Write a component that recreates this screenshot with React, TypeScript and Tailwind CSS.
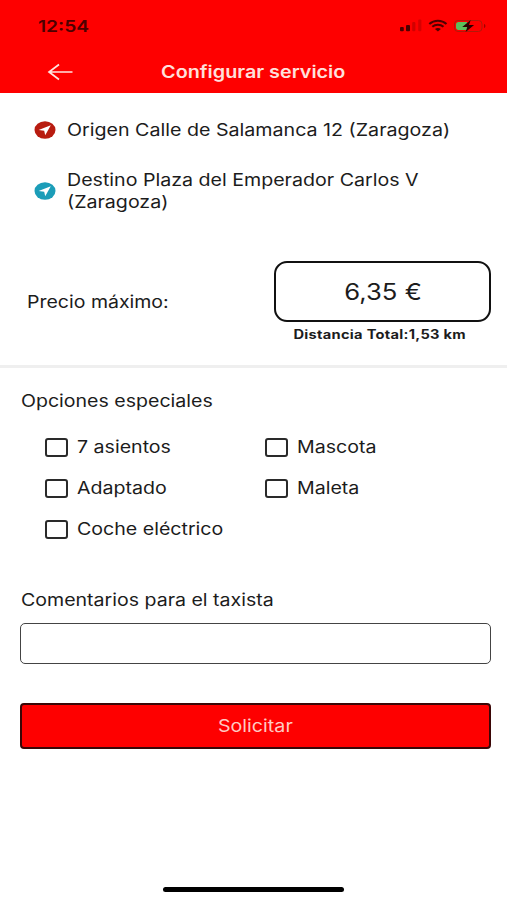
import { useState } from "react";
import type { ReactNode } from "react";
import clsx from "clsx";

const options = [
  { id: "asientos", label: "7 asientos" },
  { id: "mascota", label: "Mascota" },
  { id: "adaptado", label: "Adaptado" },
  { id: "maleta", label: "Maleta" },
  { id: "electrico", label: "Coche eléctrico" },
];

// Wide lettering used on the whole screen
function Wide({ className, children }: { className?: string; children: ReactNode }) {
  return (
    <span className={clsx("block w-max whitespace-nowrap", className)}>{children}</span>
  );
}

function StatusIcons() {
  return (
    <svg width="90" height="16" viewBox="0 0 90 16" fill="none">
      <rect x="1" y="9" width="3.8" height="4.2" rx="1" fill="#4d0000" />
      <rect x="7" y="7" width="4" height="6.2" rx="1" fill="#4d0000" />
      <rect x="13.2" y="4" width="3.2" height="9.2" rx="1" fill="#d00000" />
      <rect x="19.2" y="1.5" width="3.2" height="11.7" rx="1" fill="#d60000" />
      <path d="M30.3 6C35 1.6 42.8 1.6 47.5 6" stroke="#4d0000" strokeWidth="2.1" />
      <path d="M33.3 8.8C36.4 6 41.4 6 44.5 8.800" stroke="#4d0000" strokeWidth="2.1" />
      <path d="M35.900 11C37.500 9.500 40.300 9.500 41.900 11L38.900 13.600Z" fill="#4d0000" />
      <rect x="55.500" y="2.500" width="27.500" height="11" rx="3.500" stroke="#b01a0a" />
      <path d="M59.500 4H68V12H59.500C58 12 57 11 57 9.500V6.500C57 5 58 4 59.500 4Z" fill="#5cbf5c" />
      <path d="M85 6C86.900 6.500 86.900 9.500 85 10Z" fill="#a00000" />
      <path d="M71.700 2L63.200 8.900H68.300L66.600 14L75.100 7.100H70Z" fill="#2a0000" />
    </svg>
  );
}

function PlaceIcon({ color }: { color: string }) {
  return (
    <svg width="22" height="18" viewBox="0 0 22 18">
      <ellipse cx="11" cy="9" rx="10.500" ry="8.700" fill={color} />
      <path d="M16.800 4.300L4.600 9.100L10.200 9.800L11.200 14.300Z" fill="#fff" />
    </svg>
  );
}

export default function App() {
  const [selected, setSelected] = useState<string[]>([]);
  const [comment, setComment] = useState("");

  const toggle = (id: string) => {
    setSelected((prev) =>
      prev.includes(id) ? prev.filter((item) => item !== id) : [...prev, id]
    );
  };

  return (
    <div className="flex h-[900px] w-[507px] flex-col overflow-hidden bg-white font-['Inter','Liberation_Sans',sans-serif] text-[17px] leading-[22px] text-[#1c1c1c]">
      <header className="h-[93px] bg-[#fe0000]">
        <div className="flex h-[52px] items-center justify-between pr-[18px] pl-[38px]">
          <Wide className="origin-left scale-x-[1.2] text-base font-semibold text-[#4d0000]">12:54</Wide>
          <StatusIcons />
        </div>
        <div className="relative flex h-[39px] items-center justify-center pt-px">
          <button className="absolute left-[47px]" aria-label="Volver">
            <svg width="27" height="18" viewBox="0 0 27 18" fill="none" stroke="#ffe3df" strokeWidth="1.700">
              <path d="M25.500 9H2M12 1.500L2 9L12 16.500" />
            </svg>
          </button>
          <Wide className="scale-x-[1.163] font-semibold text-[#ffe0dc]">Configurar servicio</Wide>
        </div>
      </header>

      <section className="h-[272px] pl-[34px] pt-[26px]">
        <div className="flex items-center gap-[11px]">
          <PlaceIcon color="#b81c10" />
          <Wide className="origin-left scale-x-[1.155]">Origen Calle de Salamanca 12 (Zaragoza)</Wide>
        </div>
        <div className="mt-7 flex items-center gap-[11px]">
          <PlaceIcon color="#1b9db8" />
          <div>
            <Wide className="origin-left scale-x-[1.153]">Destino Plaza del Emperador Carlos V</Wide>
            <Wide className="origin-left scale-x-[1.153]">(Zaragoza)</Wide>
          </div>
        </div>
        <div className="mt-12 -ml-[7px] flex justify-between pr-4">
          <Wide className="mt-[30px] origin-left scale-x-[1.147]">Precio máximo:</Wide>
          <div className="flex w-[217px] flex-col items-center">
            <div className="flex h-[61px] w-full items-center justify-center rounded-[13px] border-2 border-[#111]">
              <Wide className="scale-x-[1.14] text-[22.5px]">6,35 €</Wide>
            </div>
            <Wide className="mt-[2px] mr-[5px] scale-x-[1.17] text-[12.5px] font-bold tracking-[0.25px]">
              Distancia Total:1,53 km
            </Wide>
          </div>
        </div>
      </section>
      <hr className="h-[3px] shrink-0 border-0 bg-[#efefef]" />

      <section className="px-[20px] pt-[22px]">
        <Wide className="ml-px origin-left scale-x-[1.15]">Opciones especiales</Wide>
        <div className="mt-6 ml-[25px] grid grid-cols-[220px_1fr] gap-y-[19px]">
          {options.map((option) => (
            <label key={option.id} className="flex items-center gap-[9px]">
              <input
                type="checkbox"
                className="h-[19px] w-[23px] appearance-none rounded-[3px] border-2 border-[#2a2a2a] checked:bg-[#fe0000]"
                checked={selected.includes(option.id)}
                onChange={() => toggle(option.id)}
              />
              <Wide className="origin-left scale-x-[1.152]">{option.label}</Wide>
            </label>
          ))}
        </div>
        <Wide className="mt-[49px] ml-px origin-left scale-x-[1.15]">Comentarios para el taxista</Wide>
        <input
          type="text"
          className="mt-3 block h-[41px] w-[471px] rounded-[5px] border-[1.5px] border-[#444] px-3"
          value={comment}
          onChange={(e) => setComment(e.target.value)}
        />
        <button className="mt-[39px] flex h-[46px] w-[471px] items-center justify-center rounded-[4px] border-2 border-[#3a0606] bg-[#fe0000] text-[#ffc9c2]">
          <Wide className="scale-x-[1.155]">Solicitar</Wide>
        </button>
      </section>

      <div className="mx-auto mt-auto mb-2 h-[5px] w-[181px] shrink-0 rounded-full bg-black" />
    </div>
  );
}
